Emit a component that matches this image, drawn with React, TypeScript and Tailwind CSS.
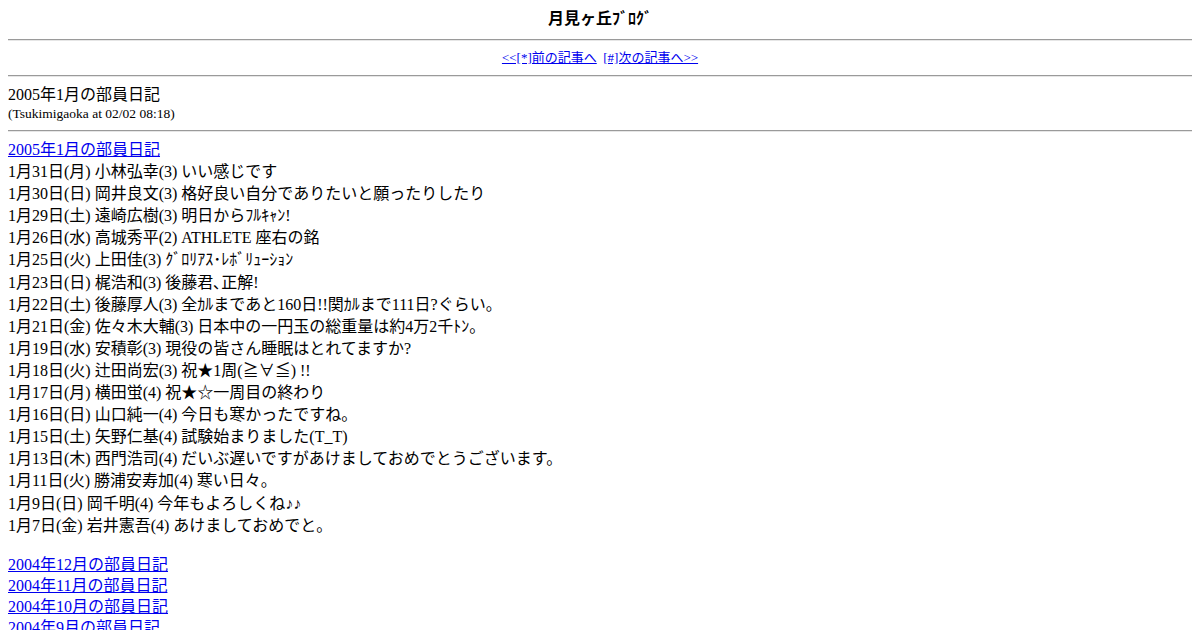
const FONT = 'font-["Liberation_Serif","Noto_Sans_CJK_JP",serif]'

const ENTRIES: string[] = [
  '1月31日(月) 小林弘幸(3) いい感じです',
  '1月30日(日) 岡井良文(3) 格好良い自分でありたいと願ったりしたり',
  '1月29日(土) 遠崎広樹(3) 明日からﾌﾙｷｬﾝ!',
  '1月26日(水) 高城秀平(2) ATHLETE 座右の銘',
  '1月25日(火) 上田佳(3) ｸﾞﾛﾘｱｽ･ﾚﾎﾞﾘｭｰｼｮﾝ',
  '1月23日(日) 梶浩和(3) 後藤君､正解!',
  '1月22日(土) 後藤厚人(3) 全ｶﾙまであと160日!!関ｶﾙまで111日?ぐらい。',
  '1月21日(金) 佐々木大輔(3) 日本中の一円玉の総重量は約4万2千ﾄﾝ。',
  '1月19日(水) 安積彰(3) 現役の皆さん睡眠はとれてますか?',
  '1月18日(火) 辻田尚宏(3) 祝★1周(≧∀≦) !!',
  '1月17日(月) 横田蛍(4) 祝★☆一周目の終わり',
  '1月16日(日) 山口純一(4) 今日も寒かったですね。',
  '1月15日(土) 矢野仁基(4) 試験始まりました(T_T)',
  '1月13日(木) 西門浩司(4) だいぶ遅いですがあけましておめでとうございます。',
  '1月11日(火) 勝浦安寿加(4) 寒い日々。',
  '1月9日(日) 岡千明(4) 今年もよろしくね♪♪',
  '1月7日(金) 岩井憲吾(4) あけましておめでと。',
]

const ARCHIVE = ['2004年12月の部員日記', '2004年11月の部員日記', '2004年10月の部員日記', '2004年9月の部員日記']

function Rule({ className = '' }: { className?: string }) {
  return <div className={`h-[2px] border-t border-[#9a9a9a] border-b border-b-[#e6e6e6] ${className}`} />
}

export default function App() {
  return (
    <div className={`bg-white text-black p-2 h-[630px] overflow-hidden ${FONT}`}>
      <div className="text-center font-bold text-[16px] leading-[22px] h-[22px]">月見ヶ丘ﾌﾞﾛｸﾞ</div>
      <Rule className="mt-[9px]" />

      <div className="mt-[8px] text-center text-[13px] leading-[18px]">
        <a href="#" className="text-[#0000ee] underline">&lt;&lt;[*]前の記事へ</a>
        <span>&nbsp; </span>
        <a href="#" className="text-[#0000ee] underline">[#]次の記事へ&gt;&gt;</a>
      </div>
      <Rule className="mt-[8px]" />

      <div className="mt-[8px] text-[16px] leading-[20px]">2005年1月の部員日記</div>
      <div className="text-[13.5px] leading-[18px]">(Tsukimigaoka at 02/02 08:18)</div>
      <Rule className="mt-[7px]" />

      <div className="mt-[7px] text-[16px] leading-[22.1px]">
        <a href="#" className="block text-[#0000ee] underline">2005年1月の部員日記</a>
        {ENTRIES.map(line => (
          <div key={line}>{line}</div>
        ))}
        <div className="h-[17px]" />
        {ARCHIVE.map(a => (
          <a key={a} href="#" className="block text-[#0000ee] underline leading-[21px]">{a}</a>
        ))}
      </div>
    </div>
  )
}
